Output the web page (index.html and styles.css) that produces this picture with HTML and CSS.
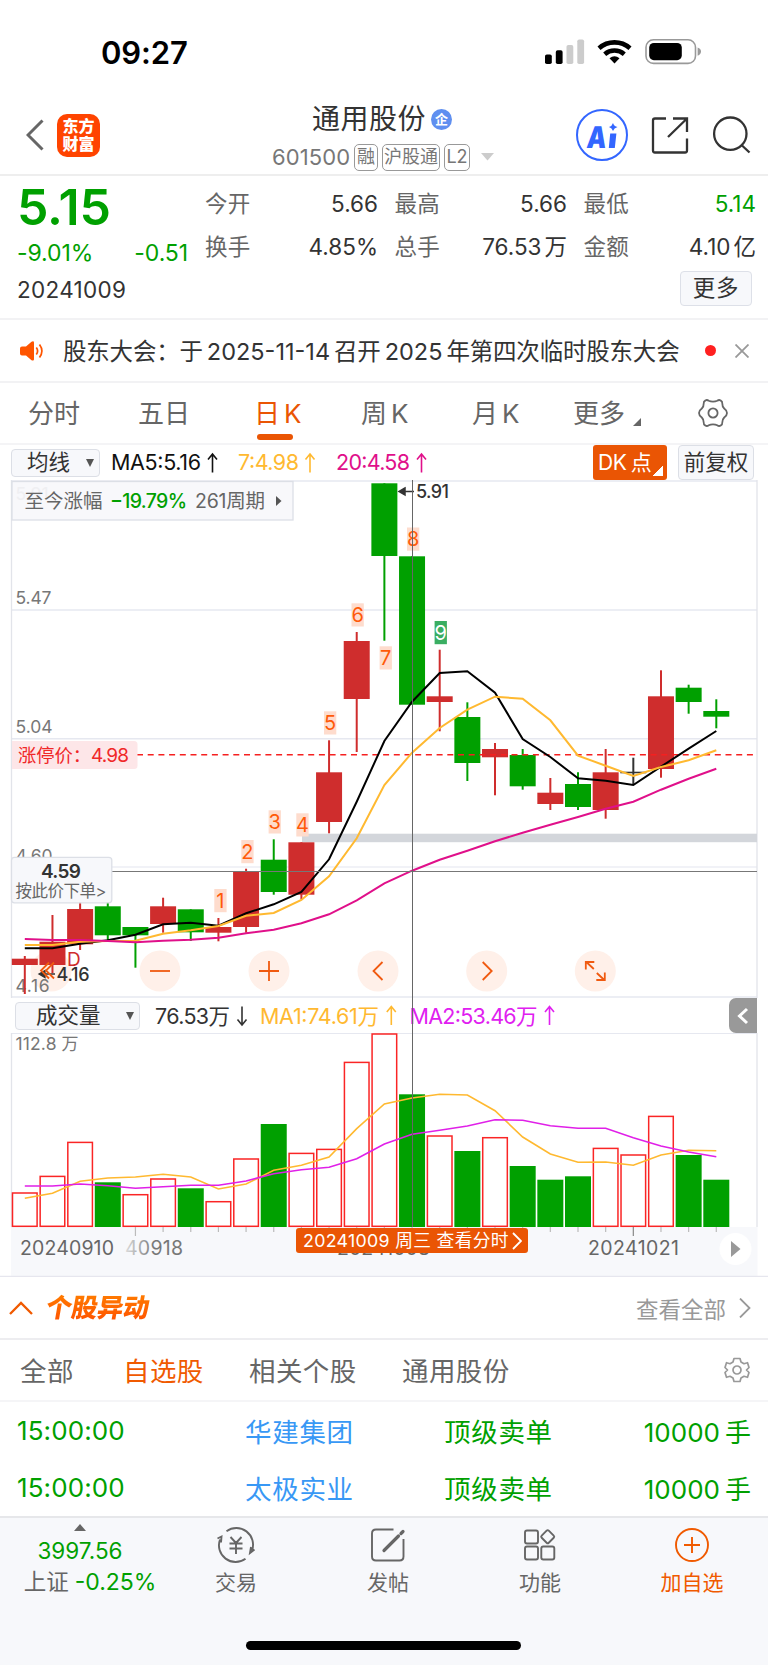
FILE: index.html
```html
<!DOCTYPE html>
<html lang="zh-CN">
<head>
<meta charset="utf-8">
<title>通用股份 601500</title>
<link rel="stylesheet" href="styles.css">
</head>
<body>
<header class="status">
  <span class="clock">09:27</span>
  <svg class="status-icons" width="160" height="30" viewBox="543 36 160 30">
    <rect x="545" y="54.5" width="6.8" height="9.5" rx="1.8"/><rect x="555.8" y="50.2" width="6.8" height="13.8" rx="1.8"/>
    <g fill="#ccc"><rect x="566.5" y="45" width="6.8" height="19" rx="1.8"/><rect x="577.3" y="39.5" width="6.8" height="24.5" rx="1.8"/></g>
    <g fill="none" stroke="#000" stroke-width="4.6"><path d="M599 48.2a23.5 23.5 0 0 1 31 0"/><path d="M604.7 54.2a15 15 0 0 1 19.6 0"/></g>
    <path d="M614.5 63.5l-5-5.2a8 8 0 0 1 10 0z"/>
    <rect x="646" y="39.8" width="49.5" height="23.6" rx="7.5" fill="none" stroke="#999" stroke-width="1.6"/>
    <rect x="649.2" y="43" width="32.6" height="17.2" rx="4.6"/><path d="M697.6 47.5q3.4 1.2 3.4 4.1t-3.4 4.1z" fill="#999"/>
  </svg>
</header>

<div class="titlebar">
  <svg class="back" width="18" height="32" viewBox="0 0 18 32"><path d="M16.5 1.5L2 16l14.500 14.500" fill="none" stroke="#666" stroke-width="3"/></svg>
  <div class="logo"><span>东方</span><span>财富</span></div>
  <div class="title">
    <div class="name">通用股份<i class="badge">企</i></div>
    <div class="code"><span class="num">601500</span><b>融</b><b class="w3">沪股通</b><b class="l2">L2</b><svg width="13" height="8" viewBox="0 0 13 8"><path d="M0 0h13L6.500 7.500z" fill="#ccc"/></svg></div>
  </div>
  <div class="ai"><span>A</span><svg width="10" height="25" viewBox="0 0 10 25"><path d="M5 0q1 3.500 4.500 4Q6 4.800 5 8 4 4.800 1 4q3-.8 4-4zM2.200 10.500h6.200L6.800 25H.8z" fill="#3366ff"/></svg></div>
  <svg class="share" width="38" height="38" viewBox="651 116 38 38" fill="none" stroke="#333" stroke-width="2.300"><path d="M666 118.500h-11q-2 0-2 2v30q0 2 2 2h30q2 0 2-2v-12M673 118.500h14V132M687 118.500l-19 18.500"/></svg>
  <svg class="search" width="40" height="40" viewBox="712 115 40 40" fill="none" stroke="#333" stroke-width="2.300"><circle cx="730.300" cy="133.700" r="16.200"/><path d="M741.500 145l8 7.500"/></svg>
</div>

<section class="quote">
  <div class="left">
    <div class="price">5.15</div>
    <div class="chg"><span>-9.01%</span><span>-0.51</span></div>
    <div class="day">20241009</div>
  </div>
  <dl class="stats">
    <dt>今开</dt><dd>5.66</dd><dt>最高</dt><dd>5.66</dd><dt>最低</dt><dd class="g">5.14</dd>
    <dt>换手</dt><dd>4.85%</dd><dt>总手</dt><dd>76.53<i>万</i></dd><dt>金额</dt><dd>4.10<i>亿</i></dd>
    <dd class="more">更多</dd>
  </dl>
</section>

<section class="notice">
  <svg width="24" height="20" viewBox="0 0 24 20"><path d="M0 7.500Q0 5.500 2 5.500h4L11.500.8q2.500-1.300 2.500 1v16.400q0 2.200-2.500 1L6 14.500H2q-2 0-2-2z" fill="#ff5500"/><path d="M16.300 6.500q2.600 3.500 0 7M19.500 3.500q4.800 6.500 0 13" fill="none" stroke="#ff5500" stroke-width="1.700"/></svg>
  <p>股东大会：于<span>2025-11-14</span>召开<span>2025</span>年第四次临时股东大会</p>
  <i class="dot"></i>
  <svg width="14" height="14" viewBox="0 0 14 14"><path d="M.5.5l13 13M13.500.5l-13 13" stroke="#999" stroke-width="1.800"/></svg>
</section>

<nav class="periods">
  <span>分时</span><span>五日</span><span class="on">日<em>K</em></span><span>周<em>K</em></span><span>月<em>K</em></span><span class="drop">更多</span>
  <svg width="30" height="30" viewBox="-15 -15 30 30" fill="none" stroke="#666" stroke-width="1.800"><path d="M-7.500-12.600Q-6-13.500-4.200-12.200-2.500-11.300 0-11.300T4.200-12.200Q6-13.500 7.500-12.600 9.600-11.500 9.300-9.500 9.200-6.500 11.200-4.500 14-2.500 14 0T11.200 4.500Q9.200 6.500 9.300 9.500 9.600 11.500 7.500 12.600 6 13.500 4.200 12.200 2.500 11.300 0 11.300T-4.200 12.200Q-6 13.500-7.500 12.600-9.600 11.500-9.300 9.500-9.200 6.500-11.200 4.500-14 2.500-14 0T-11.200-4.500Q-9.200-6.500-9.300-9.500-9.600-11.500-7.500-12.600z"/><circle r="4.600"/></svg>
</nav>

<div class="indicators">
  <span class="select ma">均线<i></i></span>
  <svg width="330" height="34" viewBox="105 446 330 34" font-size="21.500">
    <text x="111" y="470" textLength="90" fill="#111">MA5:5.16</text><path d="M212.500 472.500v-18m-4.500 5l4.500-5.500 4.500 5.500" stroke="#111"/>
    <text x="238" y="470" textLength="61" fill="#ffb930">7:4.98</text><path d="M310 472.500v-18m-4.500 5l4.500-5.500 4.500 5.500" stroke="#ffb930"/>
    <text x="336" y="470" textLength="74" fill="#e0108a">20:4.58</text><path d="M421.500 472.500v-18m-4.500 5l4.500-5.500 4.500 5.500" stroke="#e0108a"/>
  </svg>
  <span class="dk">DK<em>点</em></span><span class="fq">前复权</span>
</div>

<main class="chart">
  <svg class="pane" id="price" width="768" height="518" viewBox="0 480 768 518"></svg>
  <div class="volhead">
    <span class="select vol">成交量<i></i></span>
    <svg width="410" height="34" viewBox="150 999 410 34" font-size="21.500">
      <text x="155" y="1023.500" textLength="75" fill="#333">76.53万</text><path d="M242 1006.500v18m-4.500-5l4.500 5.500 4.500-5.500" stroke="#333"/>
      <text x="260" y="1023.500" textLength="119" fill="#ffb930">MA1:74.61万</text><path d="M391.300 1025v-18m-4.500 5l4.500-5.500 4.500 5.500" stroke="#ffb930"/>
      <text x="409.500" y="1023.500" textLength="128" fill="#e020f0">MA2:53.46万</text><path d="M549.500 1025v-18m-4.500 5l4.500-5.500 4.500 5.500" stroke="#e020f0"/>
    </svg>
    <span class="side"><svg width="12" height="18" viewBox="0 0 12 18"><path d="M10 2L2.500 9l7.500 7" fill="none" stroke="#fff" stroke-width="3"/></svg></span>
  </div>
  <svg class="pane" id="volume" width="768" height="244" viewBox="0 1033 768 244"></svg>
  <i class="cross"></i>
  <div class="tip">20241009 周三 查看分时<svg width="10" height="18" viewBox="0 0 10 18"><path d="M1 1l8 8-8 8" fill="none" stroke="#fff" stroke-width="1.800"/></svg></div>
</main>

<section class="movehead">
  <svg width="24" height="14" viewBox="0 0 24 14"><path d="M1 13L12 2l11 11" fill="none" stroke="#f05a00" stroke-width="2.300"/></svg>
  <h2>个股异动</h2><span>查看全部</span>
  <svg width="12" height="20" viewBox="0 0 12 20"><path d="M1 .5L10.500 10 1 19.500" fill="none" stroke="#999" stroke-width="1.800"/></svg>
</section>
<nav class="filters">
  <span>全部</span><span class="on">自选股</span><span>相关个股</span><span>通用股份</span>
  <svg width="26" height="26" viewBox="-13 -13 26 26" fill="none" stroke="#999" stroke-width="1.700"><path d="M-3-11.500H3L4-8 7-6.300 10.500-7.300 12-2.500 9.500 0 12 2.500 10.500 7.300 7 6.300 4 8 3 11.500H-3L-4 8-7 6.300-10.500 7.300-12 2.500-9.500 0-12-2.500-10.500-7.300-7-6.300-4-8z" stroke-linejoin="round"/><circle r="4"/></svg>
</nav>
<div class="moves">
  <div class="move"><span>15:00:00</span><a>华建集团</a><span class="cn">顶级卖单</span><span class="qty">10000<i>手</i></span></div>
  <div class="move"><span>15:00:00</span><a>太极实业</a><span class="cn">顶级卖单</span><span class="qty">10000<i>手</i></span></div>
</div>

<footer class="tabbar">
  <div class="index"><svg width="12" height="7" viewBox="0 0 12 7"><path d="M6 0l6 7H0z" fill="#666"/></svg><span class="pt">3997.56</span><span class="pc">上证<b>-0.25%</b></span></div>
  <div class="tab"><svg width="42" height="36" viewBox="-21 -18 42 36"><path d="M-9.500-13.800A16.700 16.700 0 0 1 16 5.500M18.500 4.500l-4.500 3.500 1-6M9.500 13.800A16.700 16.700 0 0 1-16-5.500M-18.500-6.500l4-2-.5 6M-5.500-8L0-2l5.500-6M-6.500-1.500h13M-6.500 3.500h13M0-2V9"/></svg><span>交易</span></div>
  <div class="tab"><svg width="42" height="36" viewBox="367.500 1527 42 36"><path d="M394 1529.500h-17.500q-4 0-4 4v23q0 4 4 4H400q4 0 4-4V1539"/><path d="M384.500 1550.500l14.500-14.500M401.500 1533.500l2-2" stroke-width="3.200" stroke-linecap="round"/></svg><span>发帖</span></div>
  <div class="tab"><svg width="42" height="36" viewBox="519.500 1527 42 36"><rect x="525.500" y="1530.500" width="13" height="13" rx="2"/><rect x="525.500" y="1546.500" width="13" height="13" rx="2"/><rect x="541.800" y="1546.500" width="13" height="13" rx="2"/><rect x="543.200" y="1531.700" width="10" height="10" rx="1.500" transform="rotate(45 548.200 1536.700)"/></svg><span>功能</span></div>
  <div class="tab add"><svg width="42" height="36" viewBox="-21 -18 42 36"><circle r="16"/><path d="M-8 0H8M0-8V8"/></svg><span>加自选</span></div>
  <i class="home"></i>
</footer>
<script src="chart.js"></script>
</body>
</html>
```
FILE: styles.css
```css
* { box-sizing: border-box; margin: 0; padding: 0; }
body { width: 768px; height: 1665px; background: #fff; color: #333; font-family: Inter, "Noto Sans CJK SC", sans-serif; font-weight: 400; overflow: hidden; }
i, em { font-style: normal; }
svg { display: block; flex: none; }
span, a, dt, dd, b, p { white-space: nowrap; }

.status { height: 84px; display: flex; align-items: center; padding: 21px 65px 0 101px; justify-content: space-between; color: #000; }
.clock { font-size: 31px; font-weight: 600; letter-spacing: -.1px; line-height: 40px; }
.status-icons { margin-bottom: 3px; }

.titlebar { height: 92px; border-bottom: 2px solid #eee; display: grid; grid-template-columns: 31px 215px 304px 75px 61px 40px; align-items: center; padding: 12px 0 0 26px; }
.logo { width: 43px; height: 43px; border-radius: 10px; background: #ff4400; color: #fff; font-size: 16px; font-weight: 900; line-height: 18px; padding-top: 3px; text-align: center; }
.logo span { display: block; }
.title { padding-top: 3px; white-space: nowrap; }
.name { display: flex; align-items: center; font-size: 28px; line-height: 34px; letter-spacing: .5px; padding-left: 40px; }
.badge { width: 21px; height: 21px; border-radius: 50%; background: #5f8ff0; color: #fff; font-size: 13px; font-weight: 700; line-height: 20px; text-align: center; letter-spacing: 0; margin-left: 5px; }
.code { display: flex; align-items: center; height: 28px; margin-top: 7px; color: #777; }
.num { font-size: 22px; width: 82px; letter-spacing: .1px; }
.code b { font-weight: 400; font-size: 18px; line-height: 24px; height: 27px; width: 24px; text-align: center; border: 1.500px solid #999; border-radius: 5px; margin-right: 4px; }
.code .w3 { width: 58px; }
.code .l2 { width: 26px; margin-right: 11px; }
.ai { width: 52px; height: 52px; border: 2.300px solid #3366ff; border-radius: 50%; display: flex; justify-content: center; align-items: center; gap: 3px; color: #3366ff; }
.ai span { font-size: 30px; font-weight: 900; line-height: 30px; transform: skewX(-6deg) scaleX(.82); margin: 4px -3px 0 -1px; }

.quote { height: 144px; border-bottom: 2px solid #f2f2f4; display: flex; }
.left { width: 190px; padding: 0 2px 0 17px; color: #00a000; }
.price { font-size: 50px; font-weight: 600; line-height: 56px; padding-top: 3px; letter-spacing: -.1px; }
.chg { display: flex; justify-content: space-between; font-size: 23px; line-height: 32px; margin-top: 2px; letter-spacing: -.1px; }
.day { font-size: 22.500px; line-height: 32px; color: #333; margin-top: 5px; letter-spacing: .3px; }
.stats { display: grid; grid-template-columns: 72px 101px 88px 101px 88px 101px; grid-template-rows: 43px 43px 36px; padding: 6px 0 0 15px; font-size: 22.500px; line-height: 43px; width: 567px; }
.stats dt { color: #666; letter-spacing: .3px; }
.stats dt:nth-of-type(3n+2), .stats dt:nth-of-type(3n) { padding-left: 16.500px; }
.stats dd { text-align: right; }
.stats dd:nth-of-type(3n) { padding-right: 0; }
.stats dd i { margin-left: 3px; }
.stats .g { color: #00a000; }
.stats .more { grid-column: 6; justify-self: end; width: 72px; height: 35px; line-height: 32px; text-align: center; border: 1.500px solid #dde0e8; border-radius: 4px; background: #f7f8fb; margin: 3px 4px 0 0; letter-spacing: .8px; }

.notice { height: 63px; border-bottom: 2px solid #f2f2f4; display: flex; align-items: center; padding: 0 19px 0 20px; }
.notice p { width: 642px; margin-left: 19px; font-size: 23.500px; letter-spacing: -.2px; padding-bottom: 2px; }
.notice p span { margin: 0 4px; letter-spacing: 0; }
.dot { flex: none; width: 11px; height: 11px; border-radius: 50%; background: #ff2020; margin-right: 19px; }

.periods { height: 62px; border-bottom: 2px solid #f4f4f6; display: grid; grid-template-columns: 110px 116px 107px 111px 101px 125px 30px; align-items: center; padding-left: 28px; font-size: 26px; color: #666; }
.periods span { position: relative; padding-bottom: 4px; }
.periods em { margin-left: 4px; }
.periods .on { color: #ea5504; }
.periods .on::after { content: ""; position: absolute; left: 3px; bottom: -6px; width: 36px; height: 6px; border-radius: 3px; background: #ea5504; }
.drop::after { content: ""; position: absolute; left: 60px; bottom: 8px; border-left: 8px solid transparent; border-bottom: 8px solid #666; }

.indicators { height: 35px; display: flex; align-items: center; padding-left: 11px; }
.indicators text, .volhead text { font-family: Inter, "Noto Sans CJK SC", sans-serif; }
.indicators path, .volhead > svg path { fill: none; stroke-width: 1.600; }
.select { display: flex; align-items: center; justify-content: space-between; height: 28px; background: #f7f8fb; border: 1.500px solid #dcdfe6; border-radius: 4px; font-size: 21.500px; line-height: 25px; }
.select i { border: 4.500px solid transparent; border-top: 8px solid #555; border-bottom: 0; }
.ma { width: 89px; padding: 0 5px 0 15px; }
.indicators > svg { margin: 0 158px 0 5px; }
.dk { width: 74px; height: 35px; border-radius: 3px; background: linear-gradient(135deg, transparent 50%, #fff 50%) 59px 21px / 11px 10px no-repeat #ea5504; color: #fff; font-size: 21px; line-height: 35px; padding-left: 5px; letter-spacing: -.3px; }
.dk em { margin-left: 4px; }
.fq { width: 76px; height: 35px; margin-left: 11px; border: 1.500px solid #dcdfe6; border-radius: 4px; background: #f7f8fb; font-size: 21.500px; line-height: 33px; text-align: center; }

.chart { position: relative; height: 797px; }
.chart text { font-family: Inter, "Noto Sans CJK SC", sans-serif; }
.volhead { height: 35px; display: flex; align-items: center; padding-left: 15px; }
.vol { width: 125px; padding: 0 5px 0 20px; }
.volhead > svg { margin: 0 169px 0 10px; }
.side { width: 28px; height: 35px; border-radius: 7px 0 0 7px; background: #999; display: grid; place-items: center; }
.cross { position: absolute; left: 412px; top: 0; width: 1px; height: 747px; background: #666; }
.tip { position: absolute; left: 296px; top: 748px; width: 232px; height: 25px; border-radius: 3px; background: #ea5504; color: #fff; font-size: 17.800px; line-height: 25px; padding: 0 6px 0 7px; display: flex; align-items: center; justify-content: space-between; white-space: nowrap; letter-spacing: .3px; }

.movehead { height: 63px; border-bottom: 2px solid #ededf0; display: flex; align-items: center; padding: 0 17px 0 9px; }
.movehead h2 { font-size: 26px; font-weight: 900; line-height: 34px; letter-spacing: -.2px; margin-left: 13px; width: 108px; transform: skewX(-10deg); background: linear-gradient(#ff8000, #ff4d00); -webkit-background-clip: text; color: transparent; }
.movehead span { margin-left: auto; font-size: 22.500px; color: #999; margin-right: 13px; }
.filters { height: 62px; border-bottom: 2px solid #f5f5f7; display: grid; grid-template-columns: 103px 126px 153px 322px 26px; align-items: center; padding-left: 20px; font-size: 26.500px; color: #666; letter-spacing: .4px; }
.filters span { padding-bottom: 2px; }
.filters .on { color: #f05a00; }
.moves { height: 114px; font-size: 26px; color: #00a000; }
.move { height: 57px; display: grid; grid-template-columns: 228px 199px 1fr auto; align-items: center; padding: 0 17px 1px 17px; }
.move a, .move .cn { letter-spacing: .7px; font-size: 26.500px; }
.move a { color: #3898f5; }
.move i { margin-left: 5px; }
.move > span:first-child { letter-spacing: .1px; }

.tabbar { position: relative; height: 149px; background: #f7f8fb; border-top: 2px solid #e6e7ea; display: grid; grid-template-columns: 160px 152px 152px 152px 152px; align-items: start; }
.index { display: flex; flex-direction: column; align-items: center; padding-top: 6px; font-size: 22.500px; }
.index .pt { color: #00a000; line-height: 30px; margin-top: 5px; }
.index .pc { line-height: 32px; color: #666; margin-left: 20px; }
.pc b { color: #00a000; font-weight: 400; margin-left: 6px; font-size: 23px; }
.tab { display: flex; flex-direction: column; align-items: center; padding-top: 9px; font-size: 21px; color: #666; }
.tab svg { fill: none; stroke: #666; stroke-width: 1.900; }
.tab span { line-height: 30px; margin-top: 5px; }
.tab.add { color: #f05a00; }
.add svg { stroke: #f05a00; }
.home { position: absolute; left: 246px; top: 123px; width: 275px; height: 9px; border-radius: 5px; background: #000; }
```
FILE: chart.js
```js
const RED = '#cf2d2d', GREEN = '#00a000';
const X = i => 24.8 + 27.66 * i;
// body top, body bottom, wick top, wick bottom, direction
const candles = [
  [958.7,965,956,994,1],[941.7,965,915,973,1],[909,944.3,902,950,1],[906.3,935.3,902,940,0],[927,935.3,927,967.7,0],
  [906.3,924,897.7,932.7,1],[909.3,932.3,909.3,941,0],[927,932.7,918,941.3,1],[871.3,927,868.7,932.7,1],[859.7,892,839.3,894.7,0],
  [842.3,894.7,842.3,899.3,1],[772.3,822,740.3,833.3,1],[641,699,632,752,1],[483.3,556,483.3,640.7,0],[556.3,704.7,556.3,704.7,0],
  [696.3,702,649.7,731.3,1],[717,763,702.3,781,0],[749,757.3,743,795.3,1],[755,786.3,749,789.7,0],[792.7,804,778,810,1],
  [784,807,772.3,810,0],[772.3,810,749,818.7,1],[771.7,773.3,757.7,785,2],[696.3,769,670.3,777.7,1],[687.7,702,684.7,713.7,0],[711,716.7,699.3,728.3,0]];
const ma5 = [948.3,948.3,943.7,940.3,934.7,924.3,922.7,925.7,913.3,904.3,892,859.3,801.7,741,701.7,673,671.3,692.7,739,757,778.3,780.7,785,766.7,748.7,731];
const ma7 = [945,945,941.7,941,940.7,933.7,930.3,926,915.7,913,900,876.3,838.3,785,752.7,728,709.7,696.7,698.7,720.3,755.7,765.7,776,767,760.3,750.3];
const ma20 = [939,940,940,941,942.3,940.7,939.7,937.7,933.3,929.7,923.3,914.3,900.3,883.3,870.7,859.7,850.7,841.3,832.7,824.7,817,808.7,801.7,789.7,778.7,768.7];
const vols = [1192.3,1175.7,1141.7,1182.3,1194,1178.3,1188.3,1201,1158.3,1124,1152.7,1148.7,1061.7,1033.3,1094.3,1135.3,1151,1137,1166,1179.7,1176.3,1147.7,1154.3,1115.7,1155,1179.7];
const filled = new Set([3, 6, 9, 14, 16, 18, 19, 20, 24, 25]);
const vma1 = [1198.3,1193.3,1181.3,1178,1177,1174.3,1177,1189,1184,1170.3,1165.3,1157,1128.7,1104,1098,1094.3,1095,1110.7,1137,1154,1162.3,1162,1165.3,1155,1150.3,1150.7];
const vma2 = [1186,1186,1184,1185.7,1188.3,1186.7,1185.3,1185.3,1181,1173.7,1169.7,1167.3,1158.7,1144,1134.3,1130.3,1126,1119.7,1120.3,1125.7,1128.3,1128.3,1137.7,1146,1152,1156.7];

const line = (ys, c, w) => `<polyline points="${ys.map((y, i) => X(i) + ',' + y).join(' ')}" fill="none" stroke="${c}" stroke-width="${w}"/>`;
const text = (x, y, len, size, fill, s, extra = '') => `<text x="${x}" y="${y}" textLength="${len}" font-size="${size}" fill="${fill}" ${extra}>${s}</text>`;
const grid = (y, c = '#e6e8f0', w = 1.5) => `<path d="M11.500 ${y}H757" stroke="${c}" stroke-width="${w}"/>`;
const frame = (y1, y2) => `<path d="M11.500 ${y1}V${y2}M757 ${y1}V${y2}" stroke="#e2e4ea" stroke-width="1.300"/>`;
const buttons = [
  [51, 'M3-8.500L-5-.5 3 7.500M-2-8.500L-10-.5-2 7.500'], [160, 'M-10 0H10'], [269, 'M-10 0H10M0-10V10'],
  [378, 'M4.500-9L-4.500 0l9 9'], [486.7, 'M-4-9L5 0l-9 9'], [595.3, 'M-9.500-1.500V-9H-1M-9-9l7.500 7M9.500 1.500V9H1M9 9L1.500 2']];

let p = grid(481) + grid(610) + grid(738.7) + grid(867, '#eceef4') + grid(997) + frame(480, 998);
for (const [x] of buttons) p += `<circle cx="${x}" cy="971" r="20.500" fill="#fff0e9"/>`;
p += text(15.5, 604, 36, 17.5, '#777', '5.47') + text(15.5, 733, 37, 17.5, '#777', '5.04') + text(15.5, 861.5, 37, 17.5, '#777', '4.60') + text(15.5, 991.5, 34, 17.5, '#777', '4.16');
p += '<rect x="302" y="833.700" width="455" height="8.500" fill="#d3d6db"/>';
const tags = [[220.3,889,'1'],[247.3,840,'2'],[274.6,810.3,'3'],[302.3,813.3,'4'],[330,711.3,'5'],[357.5,603.3,'6'],[385.6,646.3,'7'],[413,527.5,'8'],[440.6,621,'9']];
for (const [x, y, n] of tags) {
  const nine = n === '9';
  p += `<rect x="${x - 6}" y="${y}" width="12.300" height="23.200" fill="${nine ? '#3aae62' : '#fedccd'}"/><text x="${x + .1}" y="${y + 18.8}" text-anchor="middle" font-size="20" fill="${nine ? '#fff' : '#ff5a0a'}">${n}</text>`;
}
candles.forEach(([t, b, wt, wb, d], i) => {
  const c = [GREEN, RED, '#333'][d];
  p += `<path d="M${X(i)} ${wt}V${wb}" stroke="${c}" stroke-width="2"/><rect x="${X(i) - 13}" y="${t}" width="26" height="${b - t}" fill="${c}"/>`;
});
p += '<path d="M137 754.700H757" stroke="#f52020" stroke-width="1.600" stroke-dasharray="6 4.700"/>';
p += line(ma5, '#000', 2) + line(ma7, '#ffb930', 2) + line(ma20, '#e0108a', 2);
p += '<path d="M112 871.500H757" stroke="#777" stroke-width="1"/>';
p += '<path d="M405 488l-6 3.500 6 3.500zM404 491.500h10" fill="#333" stroke="#333" stroke-width="1.500"/>' + text(416, 498, 33, 18, '#333', '5.91', 'font-weight="500"');
p += '<rect x="12" y="481.500" width="281" height="38.500" fill="#f8f8fb" stroke="#dcdfe6" stroke-width="1.300"/>';
p += text(15.5, 500, 33, 17.5, '#efeff2', '5.91') + text(24.5, 508, 78, 19.5, '#666', '至今涨幅') + text(110, 508, 77, 19.5, GREEN, '−19.79%', 'font-weight="500"') + text(195, 508, 70, 19.5, '#666', '261周期') + '<path d="M276 496v10l5.500-5z" fill="#555"/>';
p += '<path d="M12 741h122q3.500 0 3.500 3.500v21q0 3.500-3.500 3.500H12z" fill="#fde6e8"/>' + text(18, 762, 73, 18.3, '#f02828', '涨停价：') + text(91, 762, 38, 19, '#f02828', '4.98');
p += '<rect x="11.500" y="857.300" width="100.300" height="45.500" rx="3" fill="#f7f8fb" stroke="#dcdfe6" stroke-width="1.300"/>' + text(41, 878, 40, 19, '#333', '4.59', 'font-weight="600"') + text(15.5, 897, 91, 16.5, '#666', '按此价下单&gt;');
p += text(67, 965.5, 13, 19, RED, 'D');
p += '<path d="M45 970.500l-6 3.500 6 3.500zM44 974h11" fill="#333" stroke="#333" stroke-width="1.300"/>' + text(56.5, 980.500, 33, 18, '#333', '4.16', 'font-weight="500"');
for (const [x, d] of buttons) p += `<path transform="translate(${x} 971)" d="${d}" fill="none" stroke="#f05a10" stroke-width="1.800"/>`;
document.getElementById('price').innerHTML = p;

let v = '<rect x="11" y="1227" width="746.500" height="49" fill="#f7f8fb"/>' + grid(1033.3) + frame(1033, 1227);
v += text(15.5, 1050, 41, 17.5, '#777', '112.8') + text(61.5, 1050, 17, 17, '#777', '万');
vols.forEach((y, i) => {
  v += filled.has(i) ? `<rect x="${X(i) - 13}" y="${y}" width="26" height="${1227 - y}" fill="${GREEN}"/>`
    : `<rect x="${X(i) - 12.3}" y="${y + .7}" width="24.600" height="${1225.6 - y}" fill="#fff" stroke="#fa2525" stroke-width="1.500"/>`;
  v += `<path d="M${X(i)} 1227v${i === 4 || i === 22 ? 9 : 5}" stroke="${i === 22 ? '#888' : '#bbb'}" stroke-width="${i < 4 ? 0 : 1.2}"/>`;
});
v += line(vma1, '#ffb930', 1.6) + line(vma2, '#e020e8', 1.6);
v += '<defs><linearGradient id="fade"><stop offset="0" stop-color="#ddd"/><stop offset=".5" stop-color="#777"/></linearGradient></defs>';
v += text(20, 1255, 94, 19.5, '#666', '20240910') + text(125, 1255, 58, 19.5, 'url(#fade)', '40918') + text(337, 1255, 93, 19.5, '#666', '20241008') + text(588, 1255, 91, 19.5, '#666', '20241021');
v += '<circle cx="735.500" cy="1249" r="16" fill="#fff"/><path d="M731 1241v16l9.500-8z" fill="#999"/>';
v += '<path d="M0 1276.500H768" stroke="#e6e6ee" stroke-width="1.500"/>';
document.getElementById('volume').innerHTML = v;
```
